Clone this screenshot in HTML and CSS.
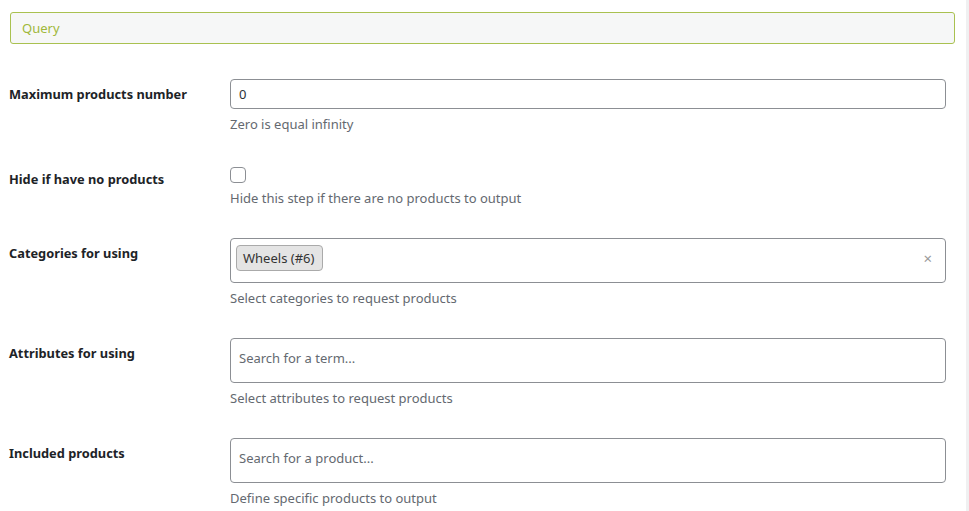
FILE: index.html
```html
<!DOCTYPE html>
<html lang="en">

<head>
    <meta charset="UTF-8">
    <title>Step settings - Query</title>
    <link rel="stylesheet" href="styles.css">
</head>

<body>

    <div class="panel">
        <!-- Section title -->
        <div class="section-title">Query</div>

        <div class="settings">
            <div class="row">
                <div class="label">Maximum products number</div>
                <div class="field">
                    <input type="text" class="text-input" value="0">
                    <p class="description">Zero is equal infinity</p>
                </div>
            </div>

            <div class="row">
                <div class="label">Hide if have no products</div>
                <div class="field">
                    <input type="checkbox" class="checkbox">
                    <p class="description">Hide this step if there are no products to output</p>
                </div>
            </div>

            <div class="row">
                <div class="label">Categories for using</div>
                <div class="field">
                    <div class="select-box">
                        <span class="tag">Wheels (#6)</span>
                        <span class="clear">&times;</span>
                    </div>
                    <p class="description">Select categories to request products</p>
                </div>
            </div>

            <div class="row">
                <div class="label">Attributes for using</div>
                <div class="field">
                    <div class="select-box">
                        <span class="placeholder">Search for a term...</span>
                    </div>
                    <p class="description">Select attributes to request products</p>
                </div>
            </div>

            <div class="row">
                <div class="label">Included products</div>
                <div class="field">
                    <div class="select-box">
                        <span class="placeholder">Search for a product...</span>
                    </div>
                    <p class="description">Define specific products to output</p>
                </div>
            </div>
        </div>
    </div>

</body>

</html>
```

FILE: styles.css
```css
body {
    font-family: 'Noto Sans', 'Open Sans', sans-serif;
    font-size: 13px;
    color: #1d2327;
    background-color: #fff;
    margin: 0;
    padding: 0;
}

.panel {
    width: 969px;
    min-height: 511px;
    box-sizing: border-box;
    border-right: 3px solid #f0f0f1;
    padding: 12px 11px 0 10px;
}

.section-title {
    background-color: #f6f7f7;
    border: 1px solid #a9c150;
    border-radius: 3px;
    color: #a0b83a;
    height: 32px;
    box-sizing: border-box;
    padding: 0 11px;
    line-height: 30px;
}

.settings {
    padding-top: 35px;
}

.row {
    display: flex;
    margin-bottom: 31px;
}

.label {
    width: 221px;
    flex-shrink: 0;
    font-weight: bold;
    font-size: 12.8px;
    line-height: 18px;
    padding-top: 6px;
    margin-left: -1px;
}

.field {
    flex: 1;
    margin-right: 9px;
}

.text-input {
    display: block;
    width: 100%;
    height: 30px;
    box-sizing: border-box;
    border: 1px solid #8c8f94;
    border-radius: 4px;
    padding: 0 8px;
    font-family: inherit;
    font-size: 13px;
    color: #2c3338;
    margin: 0;
}

.checkbox {
    appearance: none;
    -webkit-appearance: none;
    display: block;
    width: 16px;
    height: 16px;
    margin: 3px 0 0 0;
    border: 1px solid #8c8f94;
    border-radius: 4px;
    background-color: #fff;
}

.select-box {
    display: flex;
    align-items: center;
    height: 45px;
    box-sizing: border-box;
    border: 1px solid #8c8f94;
    border-radius: 4px;
    padding: 0 8px 0 5px;
}

.tag {
    background-color: #e4e4e4;
    border: 1px solid #aaa;
    border-radius: 4px;
    color: #333;
    height: 26px;
    line-height: 24px;
    box-sizing: border-box;
    padding: 0 8px 0 6px;
    margin-top: -6px;
}

.clear {
    margin-left: auto;
    margin-right: 5px;
    margin-top: -6px;
    color: #999;
    font-size: 15px;
}

.placeholder {
    color: #646970;
    padding-left: 3px;
    margin-top: -6px;
}

.description {
    margin: 6px 0 0;
    line-height: 18px;
    color: #646970;
}
```
